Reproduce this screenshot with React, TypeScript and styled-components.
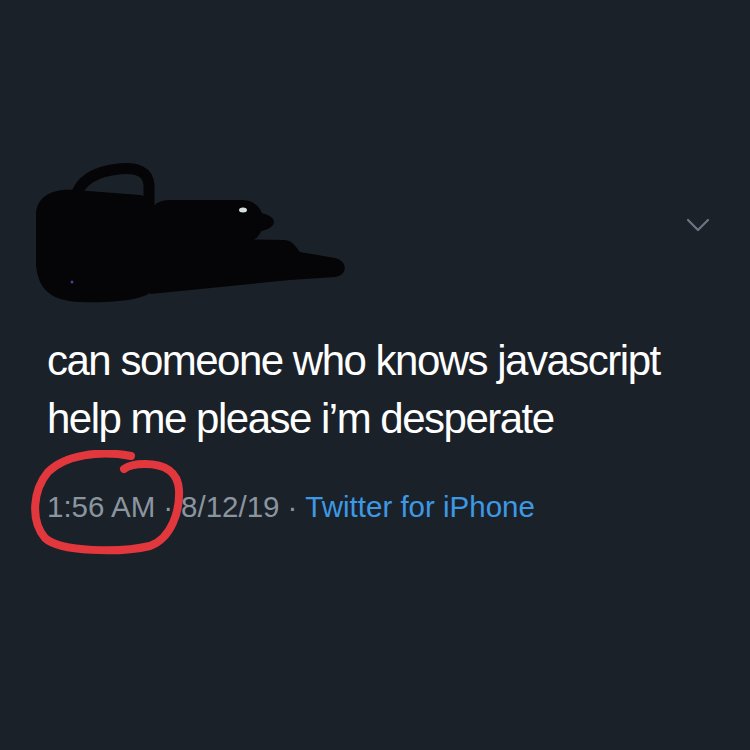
import React from "react";
import styled, { createGlobalStyle } from "styled-components";

const GlobalStyle = createGlobalStyle`
  html, body {
    margin: 0;
    padding: 0;
    background: #1b2129;
  }
`;

const Page = styled.div`
  width: 750px;
  height: 750px;
  background: #1b2129;
  box-sizing: border-box;
  padding: 160px 40px 0 47px;
  font-family: "Liberation Sans", Arial, sans-serif;
  overflow: hidden;
`;

const Header = styled.div`
  display: flex;
  justify-content: space-between;
  align-items: flex-start;
  margin-left: -17px;
  height: 150px;
`;

const Chevron = styled.svg`
  margin-top: 58px;
  display: block;
`;

const TweetText = styled.div`
  margin-top: 22px;
  color: #ffffff;
  font-size: 42px;
  line-height: 58px;
  letter-spacing: -1.5px;
`;

const Meta = styled.div`
  position: relative;
  margin-top: 39px;
  font-size: 29.5px;
  line-height: 40px;
  color: #8a959f;
  white-space: nowrap;
`;

const Dot = styled.span`
  margin: 0 8px;
`;

const Source = styled.span`
  color: #3d99e5;
`;

const Scribble = styled.svg`
  position: absolute;
  left: -20px;
  top: -37px;
  pointer-events: none;
`;

function Redaction() {
  return (
    <svg width="330" height="150" viewBox="0 0 330 150">
      <g fill="#050507">
        <path d="M 6 55 C 6 35, 25 28, 45 30 L 110 35 C 125 38, 128 55, 126 80 L 128 125 C 120 140, 90 143, 50 142 C 22 141, 8 130, 6 105 Z" />
        <rect x="118" y="40" width="115" height="43" rx="20" />
        <ellipse cx="222" cy="62" rx="22" ry="10" />
        <path d="M 120 78 L 255 80 C 264 81, 266 88, 270 92 L 305 98 C 318 101, 318 115, 305 117 L 260 120 L 120 134 Z" />
      </g>
      <path
        d="M 46 36 C 50 22, 62 12, 88 9 C 108 7, 118 12, 119 25 L 119 45"
        fill="none"
        stroke="#050507"
        strokeWidth="11"
        strokeLinecap="round"
      />
      <ellipse cx="213" cy="50" rx="4" ry="2.5" fill="#d8dde2" />
      <circle cx="42" cy="122" r="1.5" fill="#4a3f8a" />
    </svg>
  );
}

export default function App() {
  return (
    <>
      <GlobalStyle />
      <Page>
        <Header>
          <Redaction />
          <Chevron width="24" height="14" viewBox="0 0 24 14">
            <path
              d="M 2 2 L 12 12 L 22 2"
              fill="none"
              stroke="#6b7681"
              strokeWidth="2.2"
              strokeLinecap="round"
              strokeLinejoin="round"
            />
          </Chevron>
        </Header>
        <TweetText>
          can someone who knows javascript
          <br />
          help me please i’m desperate
        </TweetText>
        <Meta>
          1:56 AM<Dot>·</Dot>8/12/19<Dot>·</Dot>
          <Source>Twitter for iPhone</Source>
          <Scribble width="170" height="115" viewBox="0 0 170 115">
            <path
              d="M 104 6 C 73 0, 38 5, 21 22 C 6 40, 3 70, 18 88 C 33 102, 93 103, 123 96 C 145 88, 153 60, 152 40 C 151 22, 138 14, 118 14 C 108 14, 101 16, 97 19"
              fill="none"
              stroke="#e2383d"
              strokeWidth="8"
              strokeLinecap="round"
              strokeLinejoin="round"
            />
          </Scribble>
        </Meta>
      </Page>
    </>
  );
}
